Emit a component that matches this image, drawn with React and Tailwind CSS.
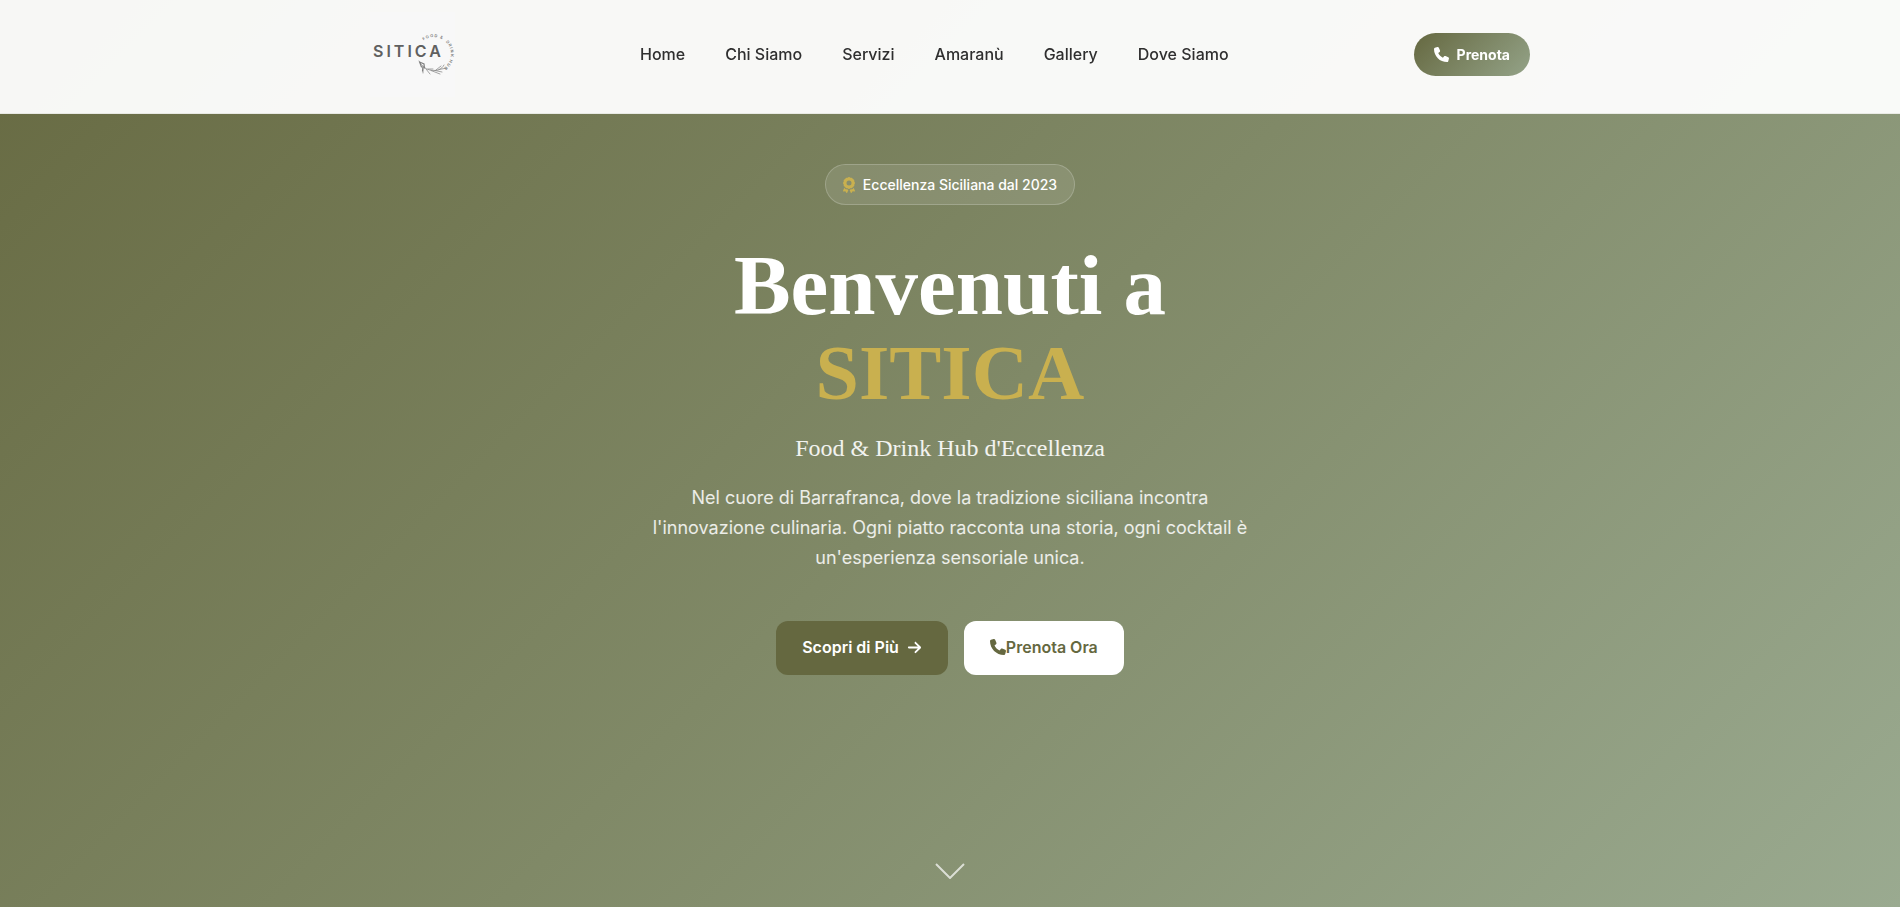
import React from 'react';
import { FaPhone, FaAward, FaArrowRight } from 'react-icons/fa6';

const navItems = [
  { title: 'Home', href: '#home' },
  { title: 'Chi Siamo', href: '#chi-siamo' },
  { title: 'Servizi', href: '#servizi' },
  { title: 'Amaranù', href: '#amaranu' },
  { title: 'Gallery', href: '#gallery' },
  { title: 'Dove Siamo', href: '#dove-siamo' },
];

// words set around the ring of the logo
const ringWords = [
  { word: 'FOOD', offset: 0 },
  { word: '&', offset: 17 },
  { word: 'DRINK', offset: 24 },
  { word: 'HUB', offset: 43 },
];

const Logo = () => (
  <svg viewBox="0 0 85 85" className="block h-[85px] w-[85px] bg-[#f8f8f8]" role="img" aria-label="SITICA">
    <defs>
      <path id="ring" d="M53.5 28.6 A17 17 0 1 1 72.5 56.7" />
    </defs>
    <text x="3" y="45" className="fill-[#606060] text-[16px] font-semibold tracking-[3px]">
      SITICA
    </text>
    {ringWords.map((item) => (
      <text key={item.word} className="fill-[#777] text-[4px] font-semibold tracking-[1px]">
        <textPath href="#ring" startOffset={item.offset}>
          {item.word}
        </textPath>
      </text>
    ))}
    <g fill="none" stroke="#808080" strokeWidth="0.7" strokeLinecap="round">
      <path d="M49 49 C52 56 60 60 68 58 C71 57 73 55 74 53" />
      <path d="M53 54 L53 61 M56 57 L60 62 M61 58.5 L70 62 M65 58.5 L72 60 M66 58 L71 54 M69 57.5 L77 56 M58 57 L63 57" />
      <path d="M49.5 50 L54 52 L54.5 56 M50 51 L51.5 55 M53 55 L52.5 59" strokeWidth="1.2" />
    </g>
  </svg>
);

const App = () => {
  return (
    <div className="font-['Inter',sans-serif]">
      {/* Header */}
      <header className="fixed inset-x-0 top-0 z-10 border-b border-[#656840]/10 bg-white/95">
        <div className="mx-auto flex max-w-[1200px] items-center justify-between px-5 pt-3 pb-4">
          <a href="#home">
            <Logo />
          </a>
          <nav className="flex gap-10 pb-0.5">
            {navItems.map((item) => (
              <a key={item.title} href={item.href} className="text-base font-medium text-[#2f2f2f]">
                {item.title}
              </a>
            ))}
          </nav>
          <button
            type="button"
            className="flex h-[43px] items-center gap-2 rounded-full bg-[linear-gradient(135deg,#656840,#94a388)] px-5 text-sm font-bold text-white"
          >
            <FaPhone className="h-[15px] w-[15px]" />
            Prenota
          </button>
        </div>
      </header>

      {/* Hero */}
      <main
        id="home"
        className="relative flex min-h-screen flex-col items-center bg-[linear-gradient(135deg,#676a42_0%,#808967_50%,#9aaa90_100%)] px-5 pt-[164px] pb-24 text-center"
      >
        <div className="flex h-[41px] items-center gap-2 rounded-full border border-white/20 bg-white/10 px-[17px] text-sm font-medium text-white">
          <FaAward className="h-4 w-3 text-[#c9b04f]" />
          Eccellenza Siciliana dal 2023
        </div>
        <h1 className="mt-9 font-['Liberation_Serif',serif] text-[85px] leading-[88px] font-bold text-white">
          Benvenuti a
          <span className="block text-[78px] text-[#c9b04f]">SITICA</span>
        </h1>
        <p className="mt-3 font-['Liberation_Serif',serif] text-2xl leading-[38px] text-white/90">
          Food &amp; Drink Hub d'Eccellenza
        </p>
        <p className="mt-4 max-w-[600px] text-lg leading-[30px] text-white/85">
          Nel cuore di Barrafranca, dove la tradizione siciliana incontra l'innovazione culinaria. Ogni piatto
          racconta una storia, ogni cocktail è un'esperienza sensoriale unica.
        </p>
        <div className="mt-12 flex gap-4">
          <button
            type="button"
            className="flex h-[54px] items-center gap-2 rounded-xl bg-[#656840] px-[26px] pb-0.5 text-base font-semibold text-white"
          >
            Scopri di Più
            <FaArrowRight className="h-[15px] w-[15px]" />
          </button>
          <button
            type="button"
            className="flex h-[54px] items-center rounded-xl bg-white px-[26px] pb-0.5 text-base font-semibold text-[#656840]"
          >
            <FaPhone className="h-4 w-4" />
            Prenota Ora
          </button>
        </div>
        <a href="#chi-siamo" aria-label="Scorri" className="absolute bottom-7 left-1/2 -translate-x-1/2 text-white/70">
          <svg viewBox="0 0 30 16" className="h-4 w-[30px]" fill="none" stroke="currentColor" strokeWidth="2">
            <path d="M1 1 L15 15 L29 1" />
          </svg>
        </a>
      </main>
    </div>
  );
};

export default App;
